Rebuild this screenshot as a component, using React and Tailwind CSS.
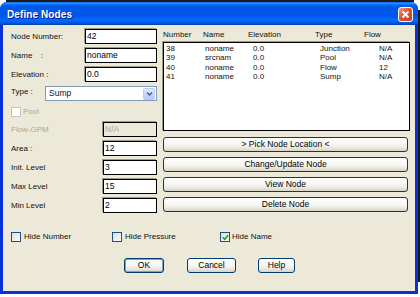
import React from "react";

const FONT = "font-['Liberation_Sans',Arial,sans-serif]";

function Input({ value, w, disabled }) {
  return (
    <div
      className={`h-[15px] ${w} border border-black shadow-[-1px_-1px_0_#9d9a8c] flex items-center pl-[1px] text-[8.5px] leading-none ${
        disabled ? "bg-[#ECE9D8] text-[#ACA899]" : "bg-white text-black"
      }`}
    >
      {value}
    </div>
  );
}

function Check({ checked, disabled }) {
  return (
    <div
      className={`w-[10px] h-[10px] border flex items-center justify-center ${
        disabled
          ? "border-[#CAC8BB] bg-white"
          : "border-[#1C5180] bg-[linear-gradient(135deg,#DCDCD7,#FFFFFF)]"
      }`}
    >
      {checked && (
        <svg width="7" height="7" viewBox="0 0 7 7">
          <path d="M0.8 3.2 L2.7 5.2 L6.2 1.2" stroke="#21A121" strokeWidth="1.6" fill="none" />
        </svg>
      )}
    </div>
  );
}

function Btn({ children, w, def }) {
  return (
    <div
      className={`h-[15px] ${w} border border-[#003C74] rounded-[3px] bg-[linear-gradient(to_bottom,#FFFFFF_0%,#F4F3EE_60%,#D8D4C8_100%)] flex items-center justify-center text-[8.5px] text-black leading-none ${
        def ? "shadow-[inset_0_0_0_1px_#7F9DD9]" : ""
      }`}
    >
      {children}
    </div>
  );
}

const rows = [
  ["38", "noname", "0.0", "Junction", "N/A"],
  ["39", "srcnam", "0.0", "Pool", "N/A"],
  ["40", "noname", "0.0", "Flow", "12"],
  ["41", "noname", "0.0", "Sump", "N/A"],
];

export default function App() {
  return (
    <div className={`w-[420px] h-[297px] bg-white overflow-hidden flex flex-col ${FONT}`}>
      <div className="h-[2px] shrink-0 mx-[6px] bg-[#1a1a1a]" />
      <div className="flex">
        <div className="w-[418px] h-[292px] flex flex-col rounded-t-[7px] overflow-hidden bg-[#0831D9]">
          {/* Title bar */}
          <div className="h-[23px] shrink-0 flex items-center justify-between pl-[7px] pr-[5px] bg-[linear-gradient(to_bottom,#0058EE_0%,#3593FF_5%,#127DFF_9%,#0262EE_15%,#0057E5_22%,#0055EB_56%,#005BF5_66%,#026AFE_76%,#0062EF_86%,#0052D6_93%,#0040AB_100%)]">
            <span className="text-white font-bold text-[10px] tracking-[0.1px] [text-shadow:1px_1px_0_#0A1883] pt-[2px]">
              Define Nodes
            </span>
            <div className="w-[15px] h-[15px] mt-[1px] rounded-[3px] border border-white bg-[linear-gradient(135deg,#F0A080,#E0532E_45%,#C8401C)] flex items-center justify-center">
              <svg width="9" height="9" viewBox="0 0 9 9">
                <path d="M1.5 1.5 L7.5 7.5 M7.5 1.5 L1.5 7.5" stroke="white" strokeWidth="1.8" />
              </svg>
            </div>
          </div>

          {/* Body */}
          <div className="flex-1 mx-[3px] mb-[3px] bg-[#ECE9D8] flex flex-col pt-[4px] pl-[8px] pr-[5px] text-[#111]">
            <div className="flex">
              {/* Left column */}
              <div className="w-[146px] flex flex-col gap-[4px] text-[8px]">
                <div className="flex items-center h-[15px]">
                  <span className="w-[74px]">Node Number:</span>
                  <Input value="42" w="w-[72px]" />
                </div>
                <div className="flex items-center h-[15px]">
                  <span className="w-[30px]">Name</span>
                  <span className="w-[44px]">:</span>
                  <Input value="noname" w="w-[72px]" />
                </div>
                <div className="flex items-center h-[15px]">
                  <span className="w-[74px]">Elevation :</span>
                  <Input value="0.0" w="w-[72px]" />
                </div>
                <div className="flex items-center h-[15px]">
                  <span className="w-[34px] self-start">Type :</span>
                  <div className="w-[112px] h-[15px] border border-[#7F9DB9] bg-white flex items-center justify-between pl-[3px] pr-[1px]">
                    <span className="text-[8.5px]">Sump</span>
                    <div className="w-[12px] h-[12px] rounded-[2px] border border-[#B9CEF7] bg-[linear-gradient(to_bottom,#E1EAFE,#B4C8F6)] flex items-center justify-center">
                      <svg width="7" height="6" viewBox="0 0 7 6">
                        <path d="M1 1.5 L3.5 4 L6 1.5" stroke="#4D6185" strokeWidth="1.5" fill="none" />
                      </svg>
                    </div>
                  </div>
                </div>
                <div className="flex items-center h-[13px] gap-[2px] text-[#ACA899]">
                  <Check disabled />
                  <span>Pool</span>
                </div>
                <div className="flex items-center h-[15px] text-[#ACA899]">
                  <span className="w-[92px]">Flow-GPM</span>
                  <Input value="N/A" w="w-[54px]" disabled />
                </div>
                <div className="flex items-center h-[15px]">
                  <span className="w-[92px]">Area :</span>
                  <Input value="12" w="w-[54px]" />
                </div>
                <div className="flex items-center h-[15px]">
                  <span className="w-[92px]">Init. Level</span>
                  <Input value="3" w="w-[54px]" />
                </div>
                <div className="flex items-center h-[15px]">
                  <span className="w-[92px]">Max Level</span>
                  <Input value="15" w="w-[54px]" />
                </div>
                <div className="flex items-center h-[15px]">
                  <span className="w-[92px]">Min Level</span>
                  <Input value="2" w="w-[54px]" />
                </div>
              </div>

              {/* Right column */}
              <div className="ml-[6px] w-[247px] flex flex-col">
                <div className="h-[13px] flex items-start text-[8px] leading-[11px]">
                  <span className="w-[40px]">Number</span>
                  <span className="w-[45px]">Name</span>
                  <span className="w-[67px]">Elevation</span>
                  <span className="w-[49px]">Type</span>
                  <span>Flow</span>
                </div>
                <div className="h-[89px] border border-black shadow-[-1px_-1px_0_#9d9a8c] bg-white pt-[1px] pl-[2px] text-[8px]">
                  {rows.map((r) => (
                    <div key={r[0]} className="flex h-[9.5px] items-center leading-none">
                      <span className="w-[39px]">{r[0]}</span>
                      <span className="w-[48px]">{r[1]}</span>
                      <span className="w-[67px]">{r[2]}</span>
                      <span className="w-[59px]">{r[3]}</span>
                      <span>{r[4]}</span>
                    </div>
                  ))}
                </div>
                <div className="mt-[6px] flex flex-col gap-[5px] pr-[2px]">
                  <Btn w="w-full">&gt; Pick Node Location &lt;</Btn>
                  <Btn w="w-full">Change/Update Node</Btn>
                  <Btn w="w-full">View Node</Btn>
                  <Btn w="w-full">Delete Node</Btn>
                </div>
              </div>
            </div>

            {/* Checkboxes */}
            <div className="mt-[18px] flex items-center text-[8px]">
              <div className="w-[101px] flex items-center gap-[3px]">
                <Check />
                <span>Hide Number</span>
              </div>
              <div className="w-[108px] flex items-center gap-[3px]">
                <Check />
                <span>Hide Pressure</span>
              </div>
              <div className="flex items-center gap-[2px]">
                <Check checked />
                <span>Hide Name</span>
              </div>
            </div>

            {/* Bottom buttons */}
            <div className="mt-[15px] ml-[113px] flex">
              <Btn w="w-[40px]" def>OK</Btn>
              <div className="ml-[23px]">
                <Btn w="w-[49px]">Cancel</Btn>
              </div>
              <div className="ml-[22px]">
                <Btn w="w-[37px]">Help</Btn>
              </div>
            </div>
          </div>
        </div>
        <div className="w-[2px] mt-[8px] h-[272px] bg-[#1a1a1a]" />
      </div>
    </div>
  );
}
